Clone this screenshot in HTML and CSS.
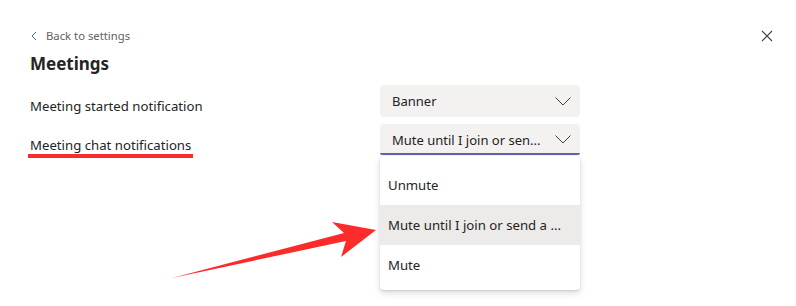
FILE: index.html
```html
<!DOCTYPE html>
<html lang="en">
<head>
    <meta charset="UTF-8">
    <meta name="viewport" content="width=device-width, initial-scale=1.0">
    <title>Settings - Meetings</title>
    <link rel="stylesheet" href="styles.css">
</head>
<body>
    <div class="panel">
        <div class="topbar">
            <a class="back" href="#">
                <svg class="back-icon" width="10" height="10" viewBox="0 0 10 10"><path d="M6 1 L2 5 L6 9" fill="none" stroke="#616161" stroke-width="1"/></svg>
                <span>Back to settings</span>
            </a>
            <button class="close" aria-label="Close">
                <svg width="12" height="12" viewBox="0 0 12 12"><path d="M1 1 L11 11 M11 1 L1 11" fill="none" stroke="#424242" stroke-width="1.1"/></svg>
            </button>
        </div>

        <h1>Meetings</h1>

        <div class="settings">
            <div class="row">
                <span class="label">Meeting started notification</span>
                <div class="select">
                    <span class="value">Banner</span>
                    <svg class="chevron" width="16" height="9" viewBox="0 0 16 9"><path d="M0.5 0.5 L8 8 L15.5 0.5" fill="none" stroke="#424242" stroke-width="1"/></svg>
                </div>
            </div>
            <div class="row">
                <span class="label marked">Meeting chat notifications</span>
                <div class="select-wrap">
                    <div class="select open">
                        <span class="value">Mute until I join or sen...</span>
                        <svg class="chevron" width="16" height="9" viewBox="0 0 16 9"><path d="M0.5 0.5 L8 8 L15.5 0.5" fill="none" stroke="#424242" stroke-width="1"/></svg>
                    </div>
                    <ul class="menu">
                        <li class="menu-item">Unmute</li>
                        <li class="menu-item selected">Mute until I join or send a ...</li>
                        <li class="menu-item">Mute</li>
                    </ul>
                </div>
            </div>
        </div>
    </div>

    <!-- annotation arrow drawn over the screenshot -->
    <svg class="arrow" width="796" height="306" viewBox="0 0 796 306">
        <polygon points="172,278 344,233 332,222 376,230 341,257 346,241" fill="#fc2b2b"/>
    </svg>
</body>
</html>
```

FILE: styles.css
```css
html, body {
    margin: 0;
    padding: 0;
}

body {
    position: relative;
    width: 796px;
    height: 306px;
    overflow: hidden;
    background: #fff;
    font-family: "Noto Sans", "Open Sans", sans-serif;
    color: #242424;
}

.panel {
    padding: 26px 0 0 30px;
}

.topbar {
    display: flex;
    align-items: center;
    justify-content: space-between;
    height: 20px;
    padding-right: 18px;
}

.back {
    display: flex;
    align-items: center;
    gap: 6px;
    color: #616161;
    text-decoration: none;
    font-size: 11.3px;
    line-height: 20px;
}

.close {
    width: 22px;
    height: 22px;
    padding: 0;
    border: none;
    background: none;
    display: flex;
    align-items: center;
    justify-content: center;
}

h1 {
    margin: 6px 0 0;
    font-size: 17px;
    line-height: 24px;
    font-weight: 700;
}

.settings {
    margin-top: 9px;
    display: flex;
    flex-direction: column;
    gap: 7px;
}

.row {
    display: grid;
    grid-template-columns: 350px 200px;
    align-items: start;
}

.label {
    font-size: 13.2px;
    line-height: 20px;
    padding-top: 11px;
    justify-self: start;
}

.label.marked {
    position: relative;
}

.label.marked::after {
    content: "";
    position: absolute;
    left: -2px;
    right: -2px;
    bottom: -3px;
    height: 4px;
    background: #fc2b2b;
}

.select-wrap {
    position: relative;
}

.select {
    box-sizing: border-box;
    height: 32px;
    display: flex;
    align-items: center;
    justify-content: space-between;
    padding: 0 9px 0 12px;
    background: #f3f2f1;
    border-radius: 4px;
    font-size: 13px;
}

.select.open {
    height: 31px;
    border-bottom: 2px solid #6264a7;
    border-radius: 4px 4px 2px 2px;
    padding-top: 2px;
}

.menu {
    position: absolute;
    top: 32px;
    left: 0;
    width: 200px;
    margin: 0;
    padding: 9px 0 5px;
    list-style: none;
    background: #fff;
    border-radius: 4px;
    box-shadow: 0 3px 7px rgba(0, 0, 0, 0.14), 0 0.6px 1.8px rgba(0, 0, 0, 0.11);
}

.menu-item {
    height: 40px;
    display: flex;
    align-items: center;
    padding-left: 8px;
    font-size: 13.2px;
}

.menu-item.selected {
    background: #edebe9;
}

.arrow {
    position: absolute;
    left: 0;
    top: 0;
    pointer-events: none;
}
```
